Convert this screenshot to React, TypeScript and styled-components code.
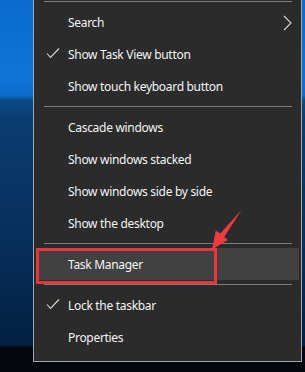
import React from "react";
import styled, { createGlobalStyle } from "styled-components";

const Global = createGlobalStyle`
  html, body { margin: 0; padding: 0; }
  body { width: 305px; height: 372px; overflow: hidden; background: #05070e; }
`;

const Desktop = styled.div`
  position: relative;
  width: 305px;
  height: 372px;
  overflow: hidden;
  background: linear-gradient(
    180deg,
    #0a6ccc 0%,
    #0d74d6 20%,
    #0c6ecd 25.5%,
    #0b4a86 27%,
    #0a3d70 32%,
    #062c58 70%,
    #03203f 92.8%,
    #05070e 93.4%,
    #05070e 100%
  );
`;

const Menu = styled.div`
  margin-top: -4px;
  margin-left: 33px;
  width: 263px;
  padding: 0 2px 8px;
  background: #2b2b2b;
  border: 1px solid #a3a7ad;
  display: flex;
  flex-direction: column;
  font-family: "Noto Sans", "Open Sans", sans-serif;
  font-size: 12px;
  letter-spacing: -0.3px;
  color: #f4f4f4;
`;

const Separator = styled.div`
  height: 9px;
  display: flex;
  align-items: center;
  padding: 0 7px 0 8px;
  &::after {
    content: "";
    flex: 1;
    height: 1px;
    background: #7d7d7d;
  }
`;

const Row = styled.div<{ $active?: boolean }>`
  position: relative;
  height: 32px;
  display: flex;
  align-items: center;
  padding-left: 32px;
  background: ${(p) => (p.$active ? "#414141" : "transparent")};
  white-space: nowrap;
`;

const CheckMark = styled.svg`
  position: absolute;
  left: 10px;
  top: 10px;
`;

const Chevron = styled.svg`
  position: absolute;
  right: 7px;
  top: 9px;
`;

const Highlight = styled.div`
  position: absolute;
  left: 0;
  top: 0;
  width: 181px;
  height: 36px;
  box-sizing: border-box;
  border: 3px solid #e4363c;
`;

const Arrow = styled.svg`
  position: absolute;
  left: 0;
  top: 0;
  pointer-events: none;
`;

const Check = () => (
  <CheckMark width="14" height="12" viewBox="0 0 14 12">
    <polyline points="1,5.5 4.5,9.5 13,0.5" fill="none" stroke="#d8d8d8" strokeWidth="1.1" />
  </CheckMark>
);

type Item = { label: string; checked?: boolean; sub?: boolean; active?: boolean } | "sep";

const items: Item[] = [
  "sep",
  { label: "Search", sub: true },
  { label: "Show Task View button", checked: true },
  { label: "Show touch keyboard button" },
  "sep",
  { label: "Cascade windows" },
  { label: "Show windows stacked" },
  { label: "Show windows side by side" },
  { label: "Show the desktop" },
  "sep",
  { label: "Task Manager", active: true },
  "sep",
  { label: "Lock the taskbar", checked: true },
  { label: "Properties" },
];

export default function App() {
  return (
    <>
      <Global />
      <Desktop>
        <Menu>
          {items.map((it, i) =>
            it === "sep" ? (
              <Separator key={i} />
            ) : (
              <Row key={i} $active={it.active}>
                {it.checked && <Check />}
                {it.label}
                {it.sub && (
                  <Chevron width="9" height="16" viewBox="0 0 9 16">
                    <polyline points="1,1 8,8 1,15" fill="none" stroke="#d8d8d8" strokeWidth="1.1" />
                  </Chevron>
                )}
                {it.active && <Highlight />}
              </Row>
            )
          )}
        </Menu>
        <Arrow width="305" height="372" viewBox="0 0 305 372">
          <polygon
            points="241.5,210 224.2,237 227.8,240 212,249.5 215.8,230.6 220.2,233.4"
            fill="#ef3a40"
          />
        </Arrow>
      </Desktop>
    </>
  );
}
